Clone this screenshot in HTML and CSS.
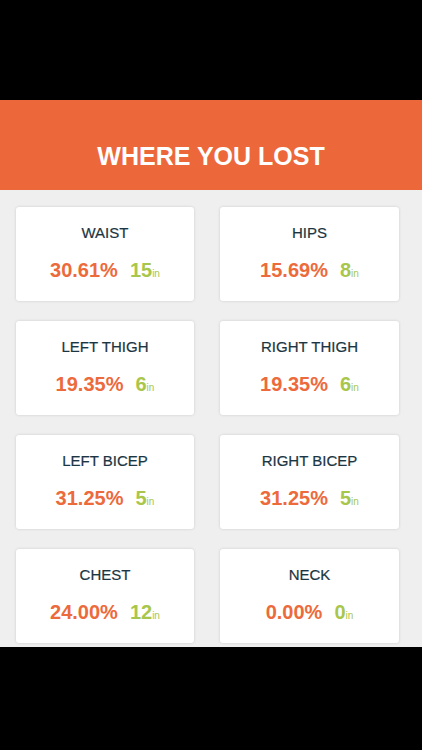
FILE: index.html
```html
<!DOCTYPE html>
<html lang="en">
<head>
    <meta charset="UTF-8">
    <meta name="viewport" content="width=device-width, initial-scale=1.0">
    <title>Where You Lost</title>
    <link rel="stylesheet" href="styles.css">
</head>
<body>
<div class="top-bar"></div>

<div class="header">
    <h1>WHERE YOU LOST</h1>
</div>

<div class="results">
    <div class="card">
        <div class="part">WAIST</div>
        <div class="values"><span class="pct">30.61%</span><span class="inches">15<small>in</small></span></div>
    </div>
    <div class="card">
        <div class="part">HIPS</div>
        <div class="values"><span class="pct">15.69%</span><span class="inches">8<small>in</small></span></div>
    </div>
    <div class="card">
        <div class="part">LEFT THIGH</div>
        <div class="values"><span class="pct">19.35%</span><span class="inches">6<small>in</small></span></div>
    </div>
    <div class="card">
        <div class="part">RIGHT THIGH</div>
        <div class="values"><span class="pct">19.35%</span><span class="inches">6<small>in</small></span></div>
    </div>
    <div class="card">
        <div class="part">LEFT BICEP</div>
        <div class="values"><span class="pct">31.25%</span><span class="inches">5<small>in</small></span></div>
    </div>
    <div class="card">
        <div class="part">RIGHT BICEP</div>
        <div class="values"><span class="pct">31.25%</span><span class="inches">5<small>in</small></span></div>
    </div>
    <div class="card">
        <div class="part">CHEST</div>
        <div class="values"><span class="pct">24.00%</span><span class="inches">12<small>in</small></span></div>
    </div>
    <div class="card">
        <div class="part">NECK</div>
        <div class="values"><span class="pct">0.00%</span><span class="inches">0<small>in</small></span></div>
    </div>
</div>

<div class="bottom-bar"></div>
</body>
</html>
```

FILE: styles.css
```css
body {
    margin: 0;
    background: #000;
    font-family: "Liberation Sans", Arial, sans-serif;
    width: 422px;
    height: 750px;
    overflow: hidden;
}

.top-bar {
    height: 100px;
}

.header {
    height: 90px;
    background-color: #ec673a;
    display: flex;
    align-items: center;
    justify-content: center;
}
h1 {
    margin: 0;
    margin-top: 22px;
    color: #fff;
    font-size: 25px;
    font-weight: bold;
}

.results {
    height: 457px;
    box-sizing: border-box;
    background-color: #efefef;
    padding: 17px 0 0 16px;
    display: grid;
    grid-template-columns: 178px 179px;
    grid-auto-rows: 94px;
    column-gap: 26px;
    row-gap: 20px;
    overflow: hidden;
}

.card {
    background: #fff;
    border-radius: 3px;
    box-shadow: 0 0 3px rgba(0, 0, 0, 0.15);
    text-align: center;
}
.part {
    margin-top: 18px;
    font-size: 15px;
    color: #1b3542;
    line-height: 15px;
    -webkit-text-stroke: 0.2px #1b3542;
}
.values {
    margin-top: 20px;
    font-weight: bold;
    line-height: 20px;
}
.pct {
    color: #ec6a3b;
    font-size: 20px;
    margin-right: 12px;
}
.inches {
    color: #a8c64b;
    font-size: 20px;
}
.inches small {
    font-size: 10px;
    font-weight: normal;
}

.bottom-bar {
    height: 103px;
}
```
